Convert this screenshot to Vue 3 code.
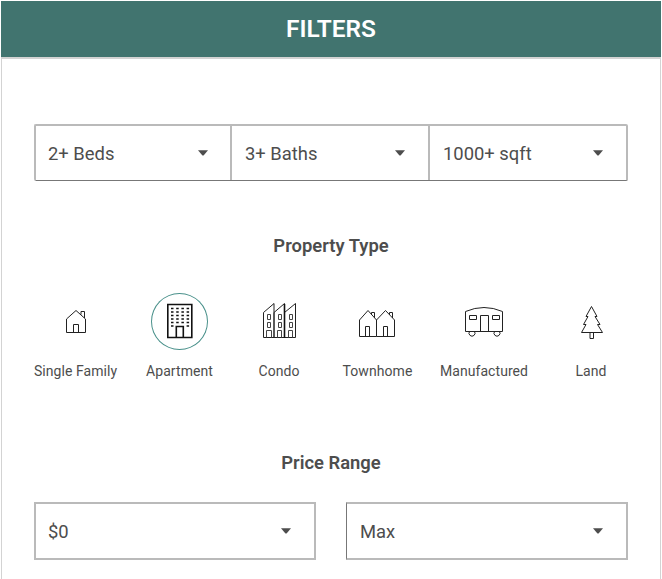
<script setup>
const rooms = ['2+ Beds', '3+ Baths', '1000+ sqft']
const prices = ['$0', 'Max']
const types = [
  { id: 'single', label: 'Single Family' },
  { id: 'apartment', label: 'Apartment' },
  { id: 'condo', label: 'Condo' },
  { id: 'townhome', label: 'Townhome' },
  { id: 'manufactured', label: 'Manufactured' },
  { id: 'land', label: 'Land' },
]
const selected = 'apartment'
</script>

<template>
  <main class="panel">
    <header class="header">FILTERS</header>
    <div class="content">
      <div class="rooms">
        <button v-for="room in rooms" :key="room" class="select room">
          <span>{{ room }}</span>
          <svg class="caret" width="10" height="6" viewBox="0 0 10 6"><path d="M0 .3H10L6 4.9Q5 6 4 4.9Z" /></svg>
        </button>
      </div>

      <h2 class="heading">Property Type</h2>
      <div class="types">
        <div v-for="type in types" :key="type.id" class="type">
          <div class="icon" :class="{ selected: type.id === selected }">
            <svg v-if="type.id === 'single'" width="57" height="57" viewBox="0 0 57 57">
              <path d="M19.5 26 29 17.5 38.5 26V39.5H19.5ZM26.5 39.5V31.5H31.5V39.5M34 21.5V18.5H37.5V25" />
            </svg>
            <svg v-else-if="type.id === 'apartment'" width="57" height="57" viewBox="0.7 1 57 57">
              <path class="bold" d="M17.5 12.5H41.5V45.5H17.5ZM26 45V34.5H33V45" />
              <path class="bold" stroke-dasharray="2.5 2.7" d="M20.7 16.5H38.8M20.7 20H38.8M20.7 23.5H38.8M20.7 27H38.8M20.7 30.5H38.8M20.7 34H23.2M36.3 34H38.8" />
            </svg>
            <svg v-else-if="type.id === 'condo'" width="57" height="57" viewBox="1 0 57 57">
              <path d="M13.5 19.5 24 10.5V44.5H13.5ZM24 19.5 34.5 10.5V44.5H24ZM34.5 19.5 45.5 10.5V44.5H34.5" />
              <path class="bold" d="M34.5 11V45" />
              <path class="thin" d="M17.5 21.5H20.5V26.5H17.5ZM28.5 21.5H31.5V26.5H28.5ZM39.5 21.5H42.5V26.5H39.5ZM17.5 29.5H20.5V34.5H17.5ZM28.5 29.5H31.5V34.5H28.5ZM39.5 29.5H42.5V34.5H39.5ZM16.5 44.5V37.5H21.5V44.5M27.5 44.5V37.5H31.5V44.5M38.5 44.5V37.5H42.5V44.5" />
            </svg>
            <svg v-else-if="type.id === 'townhome'" width="57" height="57" viewBox="1 0 57 57">
              <path d="M11.5 27 20 17.5 28.5 27V43.5H11.5ZM28.5 27 37.5 17.5 46.5 27V43.5H28.5M17.5 43.5V33.5H21.5V43.5M35.5 43.5V33.5H39.5V43.5M23.5 22V19.5H26.5V25M41.5 22V19.5H44.5V25" />
            </svg>
            <svg v-else-if="type.id === 'manufactured'" width="57" height="57" viewBox="1 0 57 57">
              <path d="M10.5 18.5Q29 10.5 47.5 18.5V38.5H10.5ZM25.5 38.5V22.5H33.5V38.5M14.5 22.5H21.5V26.5H14.5ZM37.5 22.5H44.5V26.5H37.5Z" />
              <path d="M14.5 38.5A3 3 0 1 0 19.5 38.5M39.5 38.5A3 3 0 1 0 44.5 38.5" />
            </svg>
            <svg v-else width="57" height="57" viewBox="1 0 57 57">
              <path d="M29.5 13.5 24 23.5H26L21.5 31.5H24L19.5 39.5H40.5L35.5 31.5H38L33 23.5H35ZM28 39.5V45.5H31.5V39.5" />
            </svg>
          </div>
          <span class="label">{{ type.label }}</span>
        </div>
      </div>

      <h2 class="heading price-heading">Price Range</h2>
      <div class="prices">
        <button v-for="price in prices" :key="price" class="select price">
          <span>{{ price }}</span>
          <svg class="caret" width="10" height="6" viewBox="0 0 10 6"><path d="M0 .3H10L6 4.9Q5 6 4 4.9Z" /></svg>
        </button>
      </div>
    </div>
  </main>
</template>

<style>
body {
  background: #fff;
  overflow: hidden;
}
</style>

<style scoped>
.panel {
  box-sizing: border-box;
  width: 660px;
  height: 578px;
  margin: 1px 0 0 1px;
  overflow: hidden;
  color: #4d4d4d;
  font-family: Roboto, sans-serif;
  background: #fff;
}
.header {
  box-sizing: border-box;
  height: 58px;
  border-bottom: 2px solid #d3d3d3;
  background: #41746f;
  color: #fff;
  font-size: 24.4px;
  font-weight: 600;
  line-height: 56px;
  text-align: center;
}
.content {
  box-sizing: border-box;
  height: 520px;
  padding: 65px 32px 0;
  border: solid #d3d3d3;
  border-width: 0 1px;
}
.rooms {
  box-sizing: border-box;
  display: grid;
  grid-template-columns: 196px 198px 198px;
  width: 594px;
  height: 57px;
  border: 2px solid #bababa;
  border-width: 2px 0 1px 2px;
  border-bottom-color: #777;
  border-radius: 2px;
}
.select {
  box-sizing: border-box;
  display: flex;
  align-items: center;
  justify-content: space-between;
  min-width: 0;
  margin: 0;
  padding: 0 23px 0 12px;
  border: 0 solid #bababa;
  border-right-width: 2px;
  background: transparent;
  color: inherit;
  font: 400 18.4px Roboto, sans-serif;
}
.room:first-child {
  padding-right: 22px;
}
.room:not(:first-child) {
  padding-left: 13px;
}
.caret {
  display: block;
  fill: #4d4d4d;
}
.heading {
  margin: 53px 0 0;
  font-size: 18.4px;
  font-weight: 600;
  line-height: 24px;
  text-align: center;
}
.types {
  display: grid;
  grid-template-columns: 83px 125px 74px 123px 90px 124px;
  width: 619px;
  padding-top: 35px;
}
.type {
  display: flex;
  flex-direction: column;
  align-items: center;
}
.icon {
  box-sizing: border-box;
  display: grid;
  place-items: center;
  width: 57px;
  height: 57px;
  border-radius: 50%;
}
.icon.selected {
  box-shadow: inset 0 0 0 1px #4a918b;
}
.icon svg {
  fill: none;
  stroke: #222;
  stroke-width: 1;
}
.icon .bold {
  stroke: #111;
  stroke-width: 1.6;
}
.icon .thin {
  stroke: #444;
}
.label {
  margin-top: 11px;
  font-size: 14px;
  line-height: 20px;
  letter-spacing: 0.06px;
  white-space: nowrap;
}
.price-heading {
  margin-top: 70px;
}
.prices {
  display: grid;
  grid-template-columns: 282px 282px;
  gap: 30px;
  margin-top: 27px;
}
.price {
  height: 58px;
  border-width: 2px;
}
.price:last-child {
  padding-left: 13px;
  border-left: 1px solid #777;
}
</style>
